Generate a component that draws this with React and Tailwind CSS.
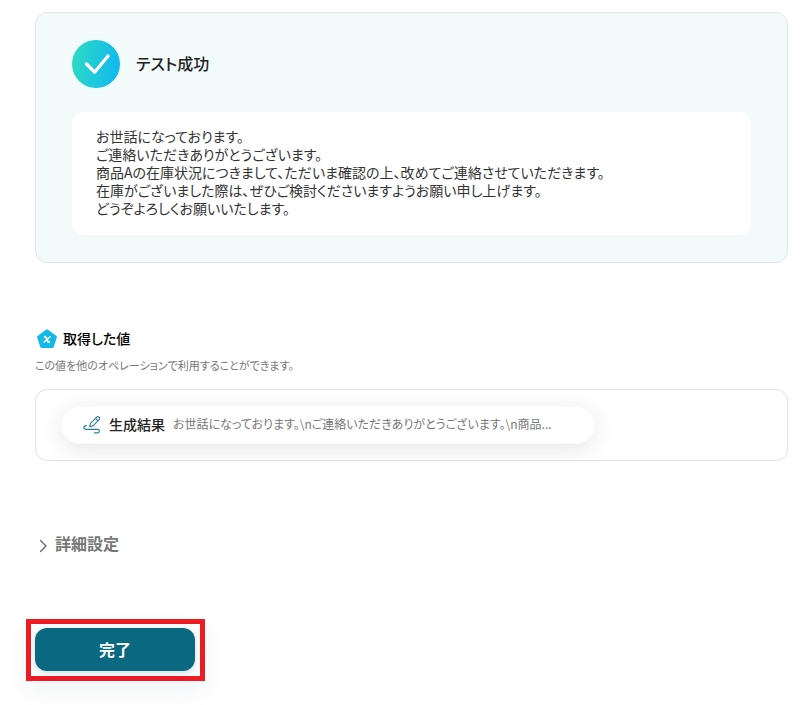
import React from "react";

const message = [
  "お世話になっております。",
  "ご連絡いただきありがとうございます。",
  "商品Aの在庫状況につきまして、ただいま確認の上、改めてご連絡させていただきます。",
  "在庫がございました際は、ぜひご検討くださいますようお願い申し上げます。",
  "どうぞよろしくお願いいたします。",
].join("\n");

function SuccessIcon() {
  return (
    <svg className="size-12 shrink-0" viewBox="0 0 48 48" fill="none" aria-hidden="true">
      <defs>
        <linearGradient id="success" x1="0" y1="20" x2="48" y2="28" gradientUnits="userSpaceOnUse">
          <stop stopColor="#2ed9c3" />
          <stop offset="1" stopColor="#10b8f0" />
        </linearGradient>
      </defs>
      <circle cx="24" cy="24" r="24" fill="url(#success)" />
      <path d="M14.5 24L22.6 32.2L36 16" stroke="#fff" strokeWidth="3.3" strokeLinecap="round" strokeLinejoin="round" />
    </svg>
  );
}

function ValueIcon() {
  return (
    <svg className="size-6 shrink-0" viewBox="0 0 24 24" fill="none" aria-hidden="true">
      <path d="M12 4L20.2 10L17.2 19.2H6.8L3.8 10Z" fill="#13b9ea" stroke="#13b9ea" strokeWidth="3.4" strokeLinejoin="round" />
      <path d="M9.6 9.6H10.5L13.2 15H14.2" stroke="#fff" strokeWidth="1.8" strokeLinecap="round" strokeLinejoin="round" />
      <path d="M15.2 9.7L9.2 15" stroke="#fff" strokeWidth="1.5" strokeLinecap="round" />
    </svg>
  );
}

function PenIcon() {
  return (
    <svg className="size-5 shrink-0" viewBox="0 0 20 20" fill="none" stroke="#2b7d9b" strokeWidth="1.1" strokeLinecap="round" strokeLinejoin="round" aria-hidden="true">
      <path d="M6.6 11.8L7.5 8.4L14 1.9C15.2 .8 17.6 3 16.4 4.4L9.9 10.9Z" />
      <path d="M12.6 3.3L15 5.8" />
      <path d="M3.4 10.6C1.8 10.8 .8 11.6 .8 12.7C.8 14 2.2 14.4 4 14.4H14.4C17 14.4 17 17.9 14.6 17.9H11.4" />
    </svg>
  );
}

export default function App() {
  return (
    <main className="bg-white pt-3 pr-[19px] pl-[35px] pb-6 font-['Noto_Sans_CJK_JP',sans-serif] text-[#222] [font-feature-settings:'palt']">
      <section className="rounded-xl border border-[#e2e6e6] bg-[#f2fafa] px-9 py-[27px]">
        <header className="flex items-center gap-4">
          <SuccessIcon />
          <h2 className="pb-0.5 text-base leading-6 font-medium">テスト成功</h2>
        </header>
        <div className="mt-6 rounded-xl bg-white px-6 pt-[15px] pb-[18px]">
          <p className="text-sm leading-[18px] whitespace-pre-line text-[#333]">{message}</p>
        </div>
      </section>

      <section className="mt-16">
        <h3 className="flex items-center gap-1 text-sm leading-6 font-medium text-black">
          <ValueIcon />
          <span className="pb-0.5 leading-[22px]">取得した値</span>
        </h3>
        <p className="mt-1.5 text-[11px] leading-4 text-[#777]">この値を他のオペレーションで利用することができます。</p>
        <div className="mt-4 overflow-hidden rounded-xl border border-[#e2e2e2] px-[25px] py-4">
          <div className="flex h-[38px] w-full max-w-[534px] items-center rounded-full bg-white px-5 shadow-[0_5px_25px_rgba(0,0,0,0.1)] ring-1 ring-black/2 ring-inset">
            <span className="flex w-7 shrink-0 justify-start pl-0.5">
              <PenIcon />
            </span>
            <span className="shrink-0 pb-0.5 text-sm leading-6 font-medium">生成結果</span>
            <span className="ml-2 truncate pb-0.5 text-xs leading-6 text-[#777]">お世話になっております。\nご連絡いただきありがとうございます。\n商品...</span>
          </div>
        </div>
      </section>

      <button type="button" aria-expanded="false" className="mt-[71px] flex items-center gap-1 text-base leading-6 font-bold text-[#777]">
        <svg className="mt-1 size-4" viewBox="0 0 16 16" fill="none" stroke="#666" strokeWidth="1.3" strokeLinecap="round" strokeLinejoin="round" aria-hidden="true">
          <path d="M5.5 2.5L11 8L5.5 13.5" />
        </svg>
        <span className="pb-0.5 leading-[22px]">詳細設定</span>
      </button>

      <div className="mt-[63px] -ml-[9px] w-fit border-5 border-[#ed1c24] pt-1 pr-[5px] pb-[5px] pl-1 shadow-[0_10px_24px_rgba(10,60,80,0.06)]">
        <button type="button" className="block h-[43px] w-40 rounded-xl bg-[#0b6881] pb-0.5 text-base leading-6 font-bold text-white shadow-[0_2px_8px_rgba(10,50,80,0.18)]">
          完了
        </button>
      </div>
    </main>
  );
}
